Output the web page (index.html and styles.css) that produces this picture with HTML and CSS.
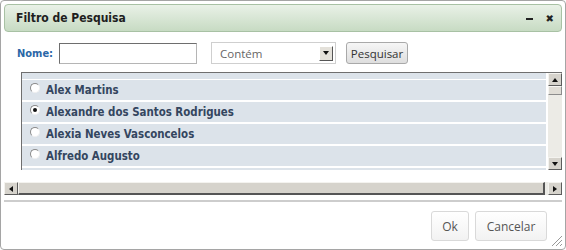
FILE: index.html
```html
<!DOCTYPE html>
<html lang="pt">
<head>
    <meta charset="UTF-8">
    <title>Filtro de Pesquisa</title>
    <link rel="stylesheet" href="styles.css">
</head>
<body>

    <!-- Dialog -->
    <div class="dialog">
        <div class="titlebar">
            <span class="title">Filtro de Pesquisa</span>
            <span class="title-icons">
                <span class="icon-min"></span>
                <span class="icon-close">✖</span>
            </span>
        </div>

        <!-- Search row -->
        <div class="search-row">
            <label class="search-label">Nome:</label>
            <div class="text-input"></div>
            <div class="select">
                <span class="select-text">Contém</span>
                <span class="select-arrow"><span class="tri-down"></span></span>
            </div>
            <button class="btn-search">Pesquisar</button>
        </div>

        <!-- Result list -->
        <div class="list-box">
            <div class="list-rows">
                <div class="row-strip"></div>
                <div class="row"><span class="radio"></span>Alex Martins</div>
                <div class="row"><span class="radio checked"></span>Alexandre dos Santos Rodrigues</div>
                <div class="row"><span class="radio"></span>Alexia Neves Vasconcelos</div>
                <div class="row"><span class="radio"></span>Alfredo Augusto</div>
                <div class="row-strip"></div>
            </div>
            <div class="vscroll">
                <div class="sb-btn"><span class="tri-up"></span></div>
                <div class="v-thumb"></div>
                <div class="v-track"></div>
                <div class="sb-btn"><span class="tri-down"></span></div>
            </div>
        </div>

        <div class="hscroll">
            <div class="sb-btn"><span class="tri-left"></span></div>
            <div class="h-thumb"></div>
            <div class="h-track"></div>
            <div class="sb-btn"><span class="tri-right"></span></div>
        </div>

        <!-- Footer -->
        <div class="footer">
            <button class="btn btn-ok">Ok</button>
            <button class="btn btn-cancel">Cancelar</button>
        </div>
        <div class="grip"></div>
    </div>

</body>
</html>
```

FILE: styles.css
```css
body {
    margin: 0;
    padding: 0;
    background: white;
    font-family: "DejaVu Sans", Verdana, sans-serif;
}

/* Dialog */
.dialog {
    position: relative;
    box-sizing: border-box;
    width: 566px;
    height: 250px;
    border: 1px solid #a5a5a5;
    border-radius: 4px;
    padding: 3px;
    display: flex;
    flex-direction: column;
    background: white;
}

.titlebar {
    box-sizing: border-box;
    height: 28px;
    border: 1px solid #a8c1a4;
    border-radius: 4px;
    background: linear-gradient(#e9f1e7, #c7dbc3);
    display: flex;
    align-items: center;
    justify-content: space-between;
    padding: 0 7px 0 11px;
}

.title {
    font-family: "DejaVu Sans Condensed", "DejaVu Sans", sans-serif;
    font-weight: bold;
    font-size: 12px;
    color: #1e1e1e;
}

.title-icons {
    display: flex;
    align-items: center;
    gap: 13px;
    color: #222;
}

.icon-min {
    width: 7px;
    height: 2px;
    margin-top: 2px;
    background: #222;
}

.icon-close {
    font-size: 10px;
    font-weight: bold;
}

/* Search row */
.search-row {
    display: flex;
    align-items: center;
    height: 22px;
    margin-top: 10px;
    padding-left: 13px;
}

.search-label {
    font-family: "DejaVu Sans Condensed", "DejaVu Sans", sans-serif;
    font-weight: bold;
    font-size: 11px;
    color: #2a66a6;
    width: 42px;
}

.text-input {
    box-sizing: border-box;
    width: 138px;
    height: 21px;
    border: 1px solid #b5b5b5;
    border-top-color: #6e6e6e;
    border-left-color: #6e6e6e;
    background: white;
}

.select {
    box-sizing: border-box;
    width: 125px;
    height: 22px;
    margin-left: 14px;
    border: 1px solid #cfcfcf;
    display: flex;
    align-items: center;
    justify-content: space-between;
    padding: 0 2px 0 8px;
}

.select-text {
    font-family: "Open Sans", sans-serif;
    font-size: 11.5px;
    color: #666;
}

.select-arrow {
    box-sizing: border-box;
    width: 14px;
    height: 15px;
    background: #e4e1da;
    border: 1px solid #fff;
    border-right-color: #555;
    border-bottom-color: #555;
    display: flex;
    align-items: center;
    justify-content: center;
}

.btn-search {
    box-sizing: border-box;
    width: 62px;
    height: 22px;
    margin-left: 10px;
    border: 1px solid #a9a9a9;
    border-radius: 3px;
    background: linear-gradient(#f6f6f6, #dedede);
    font-family: "Open Sans", sans-serif;
    font-size: 11.5px;
    color: #333;
    padding: 0;
}

/* List */
.list-box {
    display: flex;
    height: 97px;
    margin-top: 8px;
    margin-left: 17px;
    border-top: 1px solid #6f6f6f;
    border-left: 1px solid #6f6f6f;
    overflow: hidden;
}

.list-rows {
    flex: 1;
    padding-right: 1px;
    display: flex;
    flex-direction: column;
    gap: 2px;
}

.row-strip {
    flex: none;
    height: 6px;
    background: #dce3ea;
    margin-bottom: -1px;
}

.row {
    flex: none;
    height: 20px;
    background: #dce3ea;
    display: flex;
    align-items: center;
    padding-left: 8px;
    font-family: "DejaVu Sans Condensed", "DejaVu Sans", sans-serif;
    font-weight: bold;
    font-size: 11.4px;
    color: #34465f;
}

.radio {
    box-sizing: border-box;
    width: 10px;
    height: 10px;
    margin-right: 6px;
    margin-top: -4px;
    border-radius: 50%;
    border: 1px solid #8a8a8a;
    border-right-color: #f0f0f0;
    border-bottom-color: #f0f0f0;
    background: white;
    display: flex;
    align-items: center;
    justify-content: center;
}

.radio.checked::after {
    content: "";
    width: 4px;
    height: 4px;
    border-radius: 50%;
    background: #111;
}

/* Scrollbars */
.vscroll {
    width: 14px;
    display: flex;
    flex-direction: column;
    margin-left: 1px;
}

.sb-btn {
    box-sizing: border-box;
    flex: none;
    width: 14px;
    height: 13px;
    background: #d6d3cc;
    border: 1px solid #f4f3ef;
    border-right-color: #5c5c5c;
    border-bottom-color: #5c5c5c;
    display: flex;
    align-items: center;
    justify-content: center;
}

.v-thumb {
    box-sizing: border-box;
    height: 9px;
    background: #e0ddd6;
    border: 1px solid #f7f6f3;
    border-right-color: #8c8c8c;
    border-bottom-color: #8c8c8c;
}

.v-track {
    flex: 1;
    background: #ecebe6;
}

.hscroll {
    display: flex;
    height: 13px;
    margin-top: 12px;
}

.h-thumb {
    box-sizing: border-box;
    width: 527px;
    background: #d6d3cc;
    border: 1px solid #f4f3ef;
    border-right: 2px solid #555;
    border-bottom: 2px solid #555;
}

.h-track {
    flex: 1;
    background: #ecebe6;
}

.tri-up,
.tri-down,
.tri-left,
.tri-right {
    width: 0;
    height: 0;
    border: 3px solid transparent;
}

.tri-up {
    border-bottom: 4px solid #111;
    border-top-width: 0;
}

.tri-down {
    border-top: 4px solid #111;
    border-bottom-width: 0;
}

.tri-left {
    border-right: 4px solid #111;
    border-left-width: 0;
}

.tri-right {
    border-left: 4px solid #111;
    border-right-width: 0;
}

/* Footer */
.footer {
    margin-top: 5px;
    border-top: 2px solid #cdcdcd;
    display: flex;
    justify-content: flex-end;
    gap: 6px;
    padding: 9px 15px 0 0;
}

.btn {
    box-sizing: border-box;
    height: 30px;
    padding: 0;
    border: 1px solid #d9d9d9;
    border-radius: 3px;
    background: linear-gradient(#ffffff, #f2f2f2);
    font-family: "Open Sans", sans-serif;
    font-size: 12px;
    color: #555;
}

.btn-ok {
    width: 38px;
}

.btn-cancel {
    width: 72px;
}

.grip {
    position: absolute;
    right: 3px;
    bottom: 3px;
    width: 10px;
    height: 10px;
    background: linear-gradient(135deg,
        transparent 45%, #999 45%, #999 52%, transparent 52%,
        transparent 65%, #999 65%, #999 72%, transparent 72%,
        transparent 85%, #999 85%, #999 92%, transparent 92%);
}
```
